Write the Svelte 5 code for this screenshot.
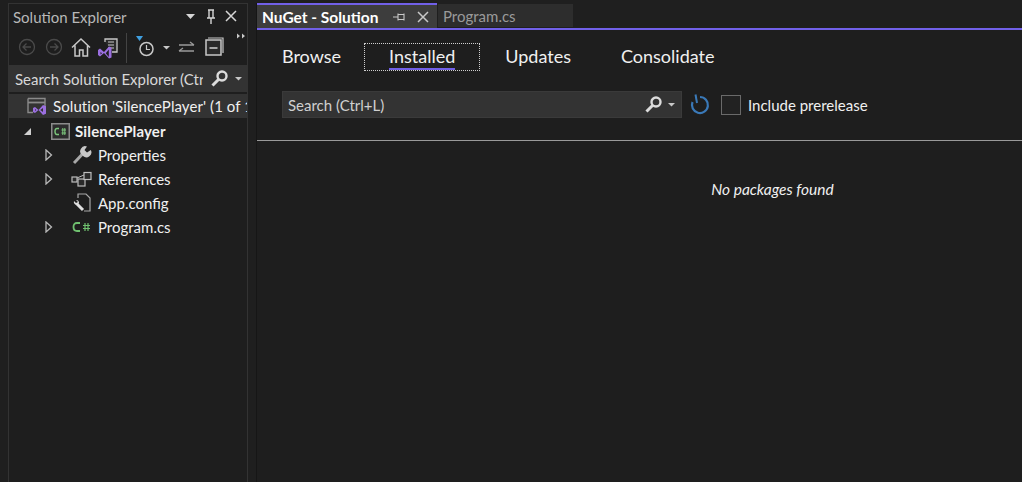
<script>
  const tree = [
    { label: 'Properties', icon: 'wrench', arrow: true },
    { label: 'References', icon: 'refs', arrow: true },
    { label: 'App.config', icon: 'config', arrow: false },
    { label: 'Program.cs', icon: 'cs', arrow: true },
  ];
  const tabs = ['Browse', 'Installed', 'Updates', 'Consolidate'];
</script>

<div class="ide">
  <aside class="explorer">
    <div class="title">
      <span class="title-text">Solution Explorer</span>
      <svg class="tool-win" width="60" height="20" viewBox="0 0 60 20">
        <path d="M1 7h9l-4.500 5z" fill="#d6d6d6" />
        <path d="M23 3h6M24 3v8M28 3v8M22 11h8M26 11v6" stroke="#d6d6d6" stroke-width="1.400" fill="none" />
        <path d="M41 4l10 10M51 4L41 14" stroke="#d6d6d6" stroke-width="1.500" />
      </svg>
    </div>

    <div class="toolbar">
      <svg width="238" height="34" viewBox="0 0 238 34">
        <g stroke="#4a4a4a" stroke-width="1.300" fill="none">
          <circle cx="18" cy="17" r="7.500" />
          <path d="M22 17h-8M17.500 13.500L14 17l3.500 3.500" />
          <circle cx="45" cy="17" r="7.500" />
          <path d="M41 17h8M45.500 13.500L49 17l-3.500 3.500" />
        </g>
        <path d="M63 17.500l9-8.500 9 8.500M66 15.500V26h4.500v-6h3.500v6h4.500V15.500" stroke="#c8c8c8" stroke-width="1.500" fill="none" />
        <path d="M96 12V9h12v13h-5" stroke="#c8c8c8" stroke-width="1.300" fill="#2a2a2a" />
        <path d="M99 12h6M99 15h6M99 18h6" stroke="#c8c8c8" stroke-width="1.200" />
        <path d="M89 20l2-1.500 4 3.500 5-5.500 2.500 1v10l-2.500 1-5-5.500-4 3.500-2-1.500zM91.500 22v2.500l1.500-1.200zM99.800 19.500l-3 3.800 3 3.700z" fill="#9b6fe0" fill-rule="evenodd" />
        <path d="M117.500 3v30" stroke="#444" />
        <path d="M127 6h7l-3.500 5z" fill="#3f9fe0" />
        <circle cx="137.500" cy="19" r="6.500" stroke="#c8c8c8" stroke-width="1.500" fill="none" />
        <path d="M137.500 15v4.500h3.500" stroke="#c8c8c8" stroke-width="1.200" fill="none" />
        <path d="M154 16h7l-3.500 3.500z" fill="#c8c8c8" />
        <path d="M170 15h15M181 12l4 3M185 21h-15M174 18l-4 3" stroke="#9a9a9a" stroke-width="1.300" fill="none" />
        <path d="M199 8h15v15" stroke="#c8c8c8" stroke-width="1.200" fill="none" />
        <rect x="197" y="10" width="15" height="15" stroke="#c8c8c8" stroke-width="1.500" fill="#2a2a2a" />
        <path d="M200.500 18h8" stroke="#e0e0e0" stroke-width="1.400" />
        <path d="M228 3.500l3 2.500-3 2.500zM233 3.500l3 2.500-3 2.500z" fill="#c8c8c8" />
      </svg>
    </div>

    <div class="search">
      <span class="search-text">Search Solution Explorer (Ctr</span>
      <svg width="38" height="20" viewBox="0 0 38 20">
        <circle cx="13" cy="7" r="4.500" stroke="#dcdcdc" stroke-width="2.400" fill="none" />
        <path d="M9.500 10.500L3.500 16.500" stroke="#dcdcdc" stroke-width="3" />
        <path d="M26 8h7l-3.500 3.500z" fill="#c8c8c8" />
      </svg>
    </div>

    <div class="row selected">
      <svg class="solution-icon" width="20" height="20" viewBox="0 0 20 20">
        <path d="M1 2.500h17v10M1 2.500v14h5" fill="none" stroke="#8a8a8a" stroke-width="1.400" />
        <path d="M1 6.500h17" stroke="#8a8a8a" stroke-width="1.800" />
        <path d="M6 12l2-1 3.500 3 4.500-5 3 1.200v7.600L16 19l-4.500-5-3.500 3-2-1zM8 13v2l1.200-1zM16 12l-2.700 2 2.700 2z" fill="#9b6fe0" fill-rule="evenodd" />
      </svg>
      <span class="solution-name">Solution 'SilencePlayer' (1 of 1</span>
    </div>

    <div class="row project">
      <svg class="expanded" width="9" height="9" viewBox="0 0 9 9"><path d="M8 1v7H1z" fill="#d0d0d0" /></svg>
      <svg class="project-icon" width="19" height="17" viewBox="0 0 19 17">
        <rect x="0.750" y="0.750" width="17.500" height="15.500" fill="#2c2c2c" stroke="#8c8c8c" stroke-width="1.500" />
        <path d="M8 5.500H6Q4 5.500 4 8.500T6 11.500H8" fill="none" stroke="#7cc67c" stroke-width="1.400" />
        <path d="M10.500 7h4.500M10.500 10h4.500M11.800 5v7M13.800 5v7" stroke="#7cc67c" stroke-width="1" />
      </svg>
      <span class="project-name">SilencePlayer</span>
    </div>

    {#each tree as item}
      <div class="row leaf">
        <span class="arrow">
          {#if item.arrow}
            <svg width="8" height="12" viewBox="0 0 8 12"><path d="M1 1l5.500 5L1 11z" fill="none" stroke="#b8b8b8" stroke-width="1.300" /></svg>
          {/if}
        </span>
        <span class="leaf-icon">
          {#if item.icon === 'wrench'}
            <svg width="20" height="20" viewBox="0 0 20 20">
              <path d="M2 18L10 9.500" stroke="#a8a8a8" stroke-width="3" />
              <path d="M10 10a5 5 0 0 1 5-8.500L12.500 5l2.500 2.500L18.800 5a5 5 0 0 1-7.800 6z" fill="#c8c8c8" />
            </svg>
          {:else if item.icon === 'refs'}
            <svg width="21" height="16" viewBox="0 0 21 16">
              <g stroke="#bdbdbd" stroke-width="1.200" fill="#2a2a2a">
                <rect x="1" y="6" width="5" height="5" />
                <rect x="7" y="8" width="7" height="7" />
                <rect x="13" y="1.500" width="7" height="7" />
              </g>
              <path d="M6 7l7-3" stroke="#bdbdbd" />
            </svg>
          {:else if item.icon === 'config'}
            <svg width="20" height="22" viewBox="0 0 20 22">
              <path d="M6 6V2h8l4 4v13h-6" stroke="#a8a8a8" stroke-width="1.200" fill="none" />
              <path d="M5 12l6 6" stroke="#e0e0e0" stroke-width="3" />
              <path d="M2 9a3 3 0 0 0 3 4l2-2a3 3 0 0 0-3-3l2 2-2 1z" fill="#e0e0e0" />
            </svg>
          {:else}
            <svg width="20" height="12" viewBox="0 0 20 12">
              <path d="M8 2H5Q1.500 2 1.500 6T5 10h3" fill="none" stroke="#6fc06f" stroke-width="1.800" />
              <path d="M11 4.500h7M11 7.500h7M13 2v8M16 2v8" stroke="#6fc06f" stroke-width="1.200" />
            </svg>
          {/if}
        </span>
        <span>{item.label}</span>
      </div>
    {/each}
  </aside>

  <main class="doc">
    <div class="tab-strip">
      <div class="tab active">
        <span class="tab-name">NuGet - Solution</span>
        <svg width="14" height="12" viewBox="0 0 14 12"><path d="M1 6h5M6 2.500v7M6 3.500h6v5H6M12 2.500v7" stroke="#c8c8c8" stroke-width="1.100" fill="none" /></svg>
        <svg width="12" height="12" viewBox="0 0 12 12"><path d="M1 1l10 10M11 1L1 11" stroke="#c8c8c8" stroke-width="1.500" /></svg>
      </div>
      <div class="tab inactive">Program.cs</div>
    </div>

    <nav class="nuget-tabs">
      {#each tabs as t, i}
        <div class="nuget-tab" class:current={i === 1}><span>{t}</span></div>
      {/each}
    </nav>

    <div class="filter">
      <div class="filter-search">
        <span>Search (Ctrl+L)</span>
        <svg width="38" height="20" viewBox="0 0 38 20">
          <circle cx="13" cy="7" r="4.500" stroke="#dcdcdc" stroke-width="2.400" fill="none" />
          <path d="M9.500 10.500L3.500 16.500" stroke="#dcdcdc" stroke-width="3" />
          <path d="M25 8h7l-3.500 3.500z" fill="#c8c8c8" />
        </svg>
      </div>
      <svg class="refresh" width="22" height="24" viewBox="0 0 22 24">
        <path d="M12 4a8 8 0 1 1-7.500 5" fill="none" stroke="#3a79b8" stroke-width="2.200" />
        <path d="M7.500 1.500L9 10" fill="none" stroke="#3a79b8" stroke-width="2" />
      </svg>
      <div class="checkbox"></div>
      <span class="check-label">Include prerelease</span>
    </div>

    <div class="results">
      <em>No packages found</em>
    </div>
  </main>
</div>

<style>
  :global(body) {
    background: #1f1f1f;
    overflow: hidden;
  }

  .ide {
    display: flex;
    height: 482px;
    font-family: Lato, "Open Sans", sans-serif;
    color: #f0f0f0;
    background: #1f1f1f;
    box-sizing: border-box;
    padding: 3px 0 0 8px;
    font-size: 15px;
  }

  /* Solution explorer */
  .explorer {
    width: 240px;
    flex-shrink: 0;
    box-sizing: border-box;
    border: 1px solid #333;
    border-bottom: 0;
    background: #1e1e1e;
    overflow: hidden;
  }

  .title {
    display: flex;
    align-items: center;
    justify-content: space-between;
    height: 26px;
    padding: 0 2px 0 4px;
  }

  .title-text { color: #b8b8b8; }

  .tool-win { flex-shrink: 0; }

  .toolbar {
    height: 35px;
    overflow: hidden;
  }

  .search {
    display: flex;
    align-items: center;
    justify-content: space-between;
    height: 27px;
    background: #333;
    padding-left: 6px;
    color: #d8d8d8;
  }

  .search-text {
    width: 188px;
    overflow: hidden;
    white-space: nowrap;
  }

  .row {
    display: flex;
    align-items: center;
    height: 24px;
    white-space: nowrap;
    overflow: hidden;
  }

  .selected {
    margin-top: 2px;
    background: #333;
    padding-left: 18px;
    gap: 6px;
  }

  .solution-name { letter-spacing: 0.08px; }

  .solution-icon { flex-shrink: 0; }

  .project {
    padding-left: 14px;
    font-weight: 700;
    margin-top: 1px;
  }

  .project-name { letter-spacing: 0.15px; }

  .project-icon { margin: 0 5px 0 19px; }

  .leaf { padding-left: 36px; }

  .leaf span:last-child { line-height: 22px; margin-top: -1px; }

  .arrow {
    width: 26px;
    display: flex;
    align-items: center;
    flex-shrink: 0;
  }

  .leaf-icon {
    width: 21px;
    margin-right: 6px;
    display: flex;
    align-items: center;
    justify-content: center;
    flex-shrink: 0;
  }

  /* Document well */
  .doc {
    flex: 1;
    margin-left: 8px;
    min-width: 0;
    border-left: 1px solid #161616;
    background: #1e1e1e;
  }

  .tab-strip {
    display: flex;
    height: 25px;
    border-bottom: 2px solid #7160e8;
    background: #1f1f1f;
  }

  .tab {
    display: flex;
    align-items: center;
    box-sizing: border-box;
  }

  .active {
    width: 180px;
    height: 25px;
    border-top: 2px solid #7160e8;
    background: #3d3d3d;
    padding-left: 5px;
  }

  .tab-name {
    font-size: 15.500px;
    font-weight: 700;
    color: #fff;
    width: 130px;
  }

  .active svg:last-child { margin-left: 11px; }

  .inactive {
    width: 135px;
    height: 23px;
    margin: 1px 0 0 1px;
    background: #2d2d2d;
    padding-left: 5px;
    color: #9a9a9a;
  }

  .nuget-tabs {
    display: flex;
    padding-top: 13px;
    height: 36px;
    font-size: 18px;
  }

  .nuget-tab {
    padding: 0 25px;
    height: 28px;
    line-height: 26px;
    box-sizing: border-box;
  }

  .nuget-tab:first-child { padding-right: 23px; }

  .nuget-tab span {
    display: inline-block;
    height: 27px;
    box-sizing: border-box;
  }

  .current {
    outline: 1px dotted #d0d0d0;
    outline-offset: -1px;
  }

  .current span { border-bottom: 2px solid #7160e8; }

  .filter {
    display: flex;
    align-items: center;
    height: 27px;
    margin-top: 12px;
    padding-left: 25px;
  }

  .filter-search {
    display: flex;
    align-items: center;
    justify-content: space-between;
    width: 400px;
    height: 27px;
    box-sizing: border-box;
    background: #333;
    border: 1px solid #3a3a3a;
    padding-left: 5px;
    color: #d0d0d0;
  }

  .refresh { margin-left: 6px; }

  .checkbox {
    width: 20px;
    height: 20px;
    box-sizing: border-box;
    border: 1px solid #6a6a6a;
    margin: 0 7px 0 11px;
    background: #222;
  }

  .results {
    margin-top: 22px;
    border-top: 1px solid #9a9a9a;
    padding: 39px 0 0 266px;
    text-align: center;
    font-size: 15.500px;
  }
</style>
